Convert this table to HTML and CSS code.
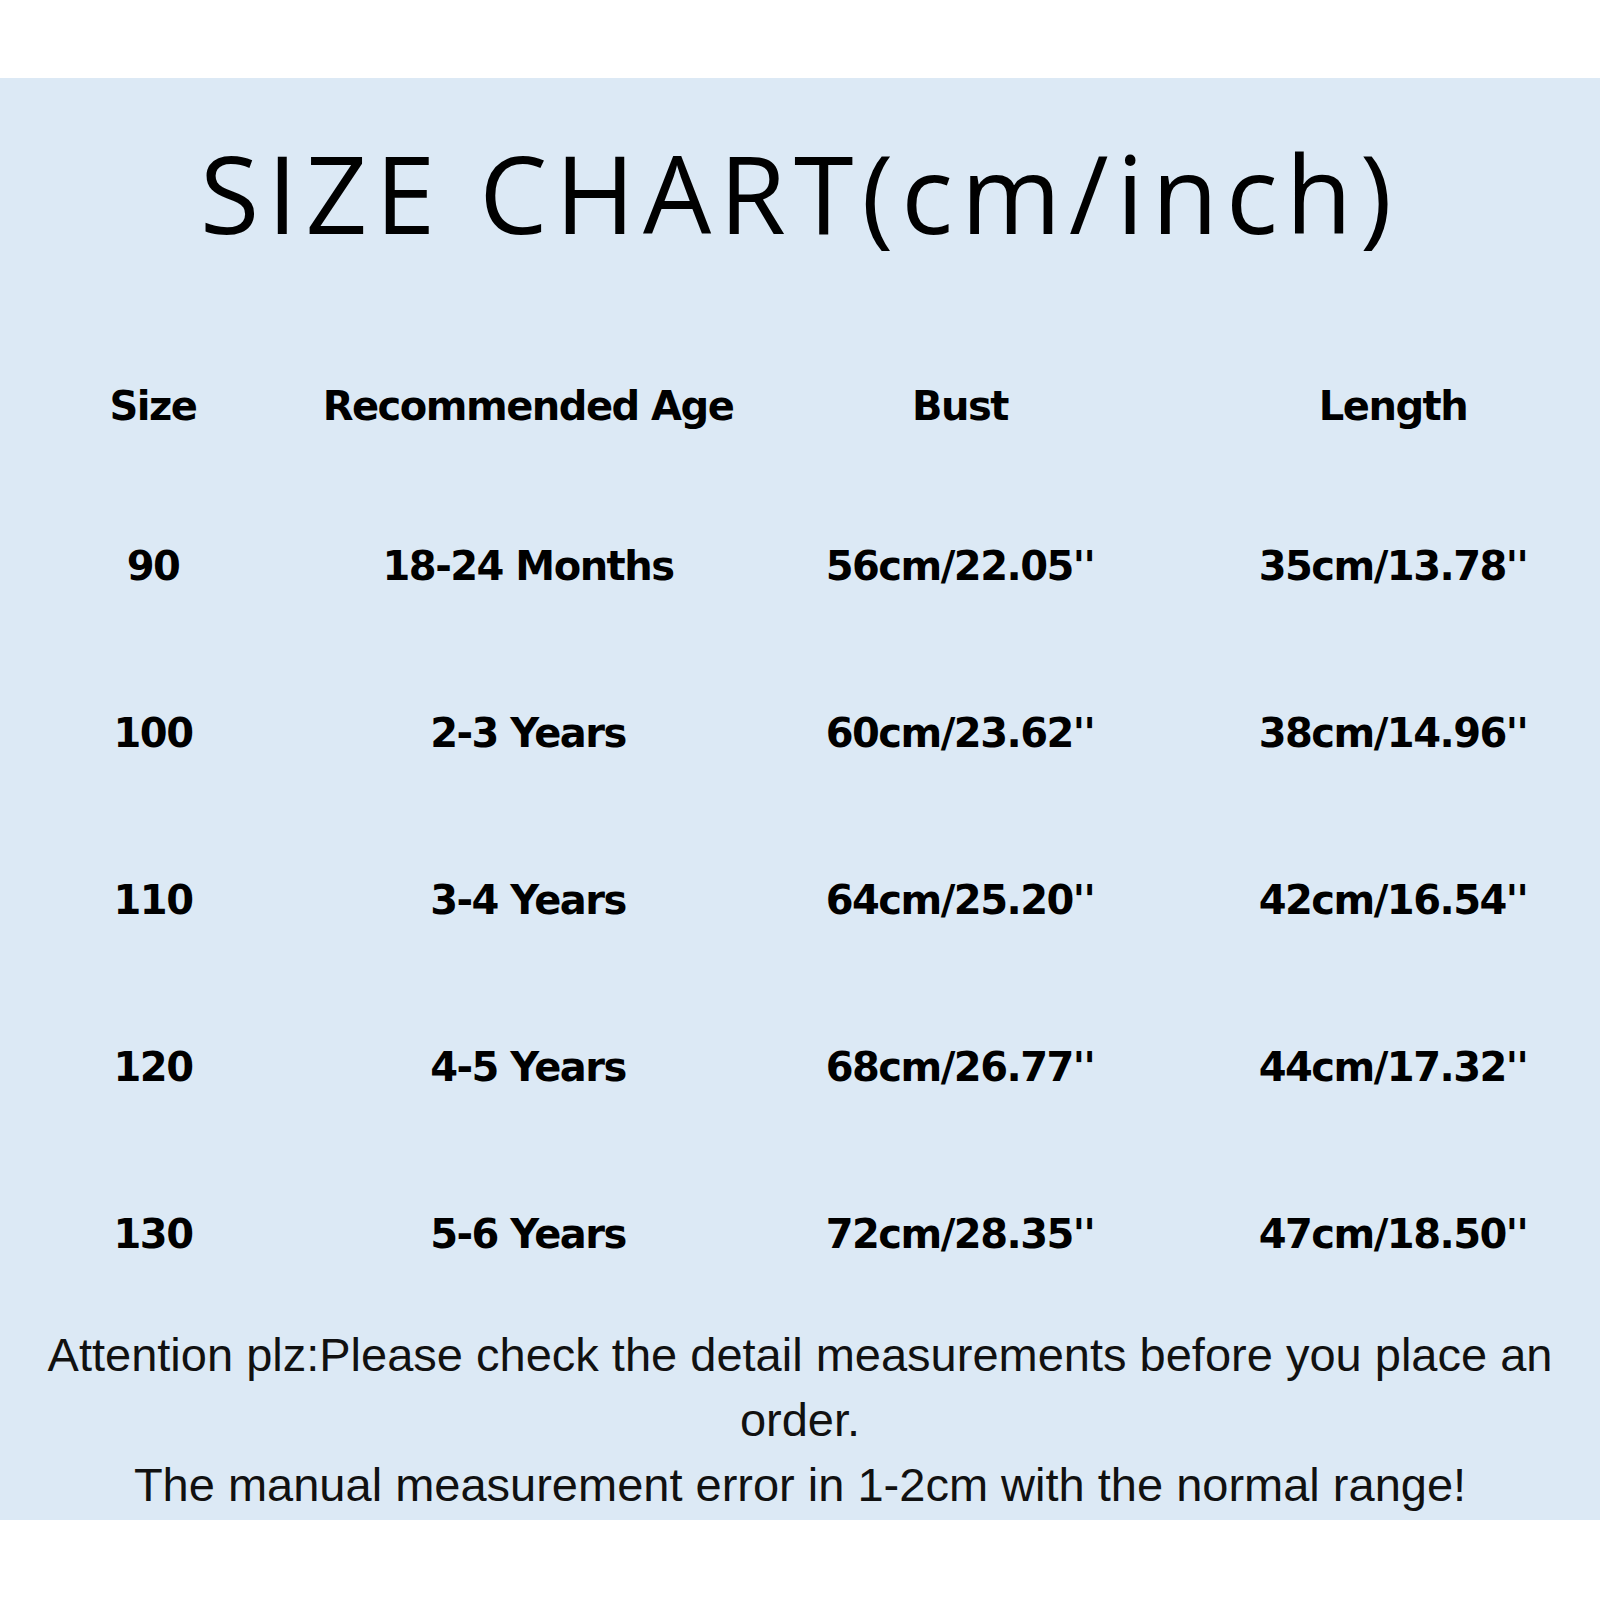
FILE: index.html
```html
<!DOCTYPE html>
<html lang="en">
<head>
<meta charset="utf-8">
<title>Size Chart</title>
<link rel="stylesheet" href="styles.css">
</head>
<body>
<main class="sheet">
  <h1 class="title">SIZE CHART(cm/inch)</h1>
  <div class="table">
    <div class="row head">
      <div class="cell">Size</div>
      <div class="cell">Recommended Age</div>
      <div class="cell">Bust</div>
      <div class="cell last">Length</div>
    </div>
    <div class="row">
      <div class="cell">90</div>
      <div class="cell">18-24 Months</div>
      <div class="cell">56cm/22.05''</div>
      <div class="cell last">35cm/13.78''</div>
    </div>
    <div class="row">
      <div class="cell">100</div>
      <div class="cell">2-3 Years</div>
      <div class="cell">60cm/23.62''</div>
      <div class="cell last">38cm/14.96''</div>
    </div>
    <div class="row">
      <div class="cell">110</div>
      <div class="cell">3-4 Years</div>
      <div class="cell">64cm/25.20''</div>
      <div class="cell last">42cm/16.54''</div>
    </div>
    <div class="row">
      <div class="cell">120</div>
      <div class="cell">4-5 Years</div>
      <div class="cell">68cm/26.77''</div>
      <div class="cell last">44cm/17.32''</div>
    </div>
    <div class="row">
      <div class="cell">130</div>
      <div class="cell">5-6 Years</div>
      <div class="cell">72cm/28.35''</div>
      <div class="cell last">47cm/18.50''</div>
    </div>
  </div>
  <div class="note">
    <p>Attention plz:Please check the detail measurements before you place an order.</p>
    <p>The manual measurement error in 1-2cm with the normal range!</p>
  </div>
</main>
</body>
</html>
```
FILE: styles.css
```css
html, body {
  margin: 0;
  padding: 0;
  background: #ffffff;
}
body {
  width: 1600px;
  height: 1600px;
  overflow: hidden;
}
.sheet {
  margin-top: 78px;
  height: 1442px;
  background: #dce9f5;
  display: flex;
  flex-direction: column;
  align-items: center;
  color: #000;
}
.title {
  margin: 0;
  padding-top: 40px;
  height: 150px;
  font-family: "Open Sans", sans-serif;
  font-weight: 400;
  font-size: 108px;
  line-height: 150px;
  letter-spacing: 8px;
  text-align: center;
  white-space: nowrap;
}
.table {
  width: 1600px;
  margin-top: 61px;
  font-family: "DejaVu Sans", sans-serif;
  font-weight: bold;
  font-size: 40px;
  letter-spacing: -1.5px;
}
.row {
  display: grid;
  grid-template-columns: 306px 444px 420px 430px;
  height: 167px;
  align-items: center;
}
.row.head {
  height: 153px;
}
.cell {
  text-align: center;
  white-space: nowrap;
}
.cell.last {
  padding-left: 16px;
}
.note {
  width: 1560px;
  margin-top: 5px;
  font-family: "Liberation Sans", sans-serif;
  font-size: 47px;
  line-height: 65px;
  color: #111;
  text-align: center;
}
.note p {
  margin: 0;
}
```
